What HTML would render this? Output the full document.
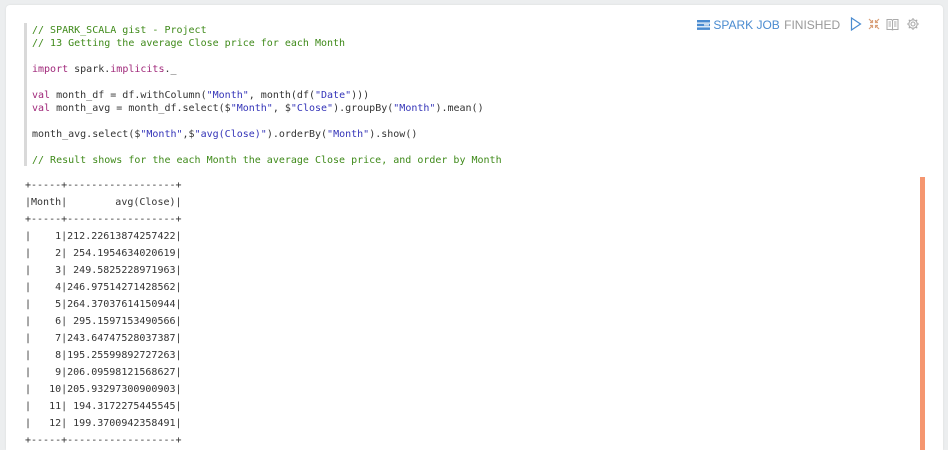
<!DOCTYPE html>
<html><head><style>
html,body{margin:0;padding:0;width:948px;height:450px;overflow:hidden;background:#eceeef;position:relative;}
.card{position:absolute;left:6px;top:5px;width:937px;height:445px;background:#fff;border-radius:4px 4px 0 0;box-shadow:0 0 2px rgba(0,0,0,.08);}
.bar{position:absolute;left:24px;top:23px;width:3px;height:143px;background:#d9d9d9;}
pre{margin:0;font-family:"DejaVu Sans Mono","Liberation Mono",monospace;}
.code{position:absolute;left:32px;top:24px;font-size:10px;line-height:13px;color:#333;}
.c{color:#3f8a1a}.k{color:#a0287a}.s{color:#3434b8}
.out{position:absolute;left:25px;top:177px;font-size:10px;line-height:17px;color:#333;}
.orange{position:absolute;left:920px;top:177px;width:5px;height:273px;background:#f59670;}
.hdr{position:absolute;top:17px;left:697px;font-family:"Liberation Sans",sans-serif;font-size:12px;white-space:nowrap;}
</style></head><body>
<div class="card"></div>
<div class="bar"></div>
<pre class="code"><span class="c">// SPARK_SCALA gist - Project
// 13 Getting the average Close price for each Month</span>

<span class="k">import</span> spark.<span class="k">implicits</span>._

<span class="k">val</span> month_df = df.withColumn(<span class="s">"Month"</span>, month(df(<span class="s">"Date"</span>)))
<span class="k">val</span> month_avg = month_df.select($<span class="s">"Month"</span>, $<span class="s">"Close"</span>).groupBy(<span class="s">"Month"</span>).mean()

month_avg.select($<span class="s">"Month"</span>,$<span class="s">"avg(Close)"</span>).orderBy(<span class="s">"Month"</span>).show()

<span class="c">// Result shows for the each Month the average Close price, and order by Month</span></pre>
<pre class="out">+-----+------------------+
|Month|        avg(Close)|
+-----+------------------+
|    1|212.22613874257422|
|    2| 254.1954634020619|
|    3| 249.5825228971963|
|    4|246.97514271428562|
|    5|264.37037614150944|
|    6| 295.1597153490566|
|    7|243.64747528037387|
|    8|195.25599892727263|
|    9|206.09598121568627|
|   10|205.93297300900903|
|   11| 194.3172275445545|
|   12| 199.3700942358491|
+-----+------------------+</pre>
<div class="orange"></div>
<div class="hdr">
<svg width="13" height="10" style="vertical-align:-1px" viewBox="0 0 13 10"><rect x="0" y="0" width="13" height="2.5" fill="#4a8bd0"/><rect x="0" y="3.7" width="13" height="2.5" fill="#4a8bd0"/><rect x="0" y="7.4" width="13" height="2.5" fill="#4a8bd0"/><rect x="7" y="4.3" width="5" height="1.2" fill="#fff"/></svg><span style="color:#4a8bd0"> SPARK JOB</span> <span style="color:#999;margin-left:1px">FINISHED</span>
<svg width="12" height="14" style="vertical-align:-2px;margin-left:6px" viewBox="0 0 12 14"><path d="M1.5 1 L10.5 7 L1.5 13 Z" fill="none" stroke="#4a8bd0" stroke-width="1.2"/></svg>
<svg width="12" height="12" style="vertical-align:-1px;margin-left:3px" viewBox="0 0 12 12" stroke="#d9a07a" stroke-width="1.2" fill="none"><path d="M1 1L4.5 4.5M4.5 2v2.5H2M11 1L7.5 4.5M7.5 2v2.5H10M1 11L4.5 7.5M4.5 10V7.5H2M11 11L7.5 7.5M7.5 10V7.5H10"/></svg>
<svg width="13" height="13" style="vertical-align:-2px;margin-left:3px" viewBox="0 0 13 13" stroke="#aaa" stroke-width="1" fill="none"><path d="M1 1.5h4.5l1 1 1-1H12V11.5H7.5l-1 .5-1-.5H1Z M6.5 2.5V11.5 M2.5 4h2.5M2.5 6h2.5M2.5 8h2.5M8 4h2.5M8 6h2.5M8 8h2.5"/></svg>
<svg width="14" height="14" style="vertical-align:-2px;margin-left:3px" viewBox="0 0 14 14" stroke="#aaa" stroke-width="1.1" fill="none"><circle cx="7" cy="7" r="2"/><path d="M7 1v2M7 11v2M1 7h2M11 7h2M2.8 2.8l1.4 1.4M9.8 9.8l1.4 1.4M2.8 11.2l1.4-1.4M9.8 4.2l1.4-1.4"/><circle cx="7" cy="7" r="4.2"/></svg>
</div>
</body></html>
